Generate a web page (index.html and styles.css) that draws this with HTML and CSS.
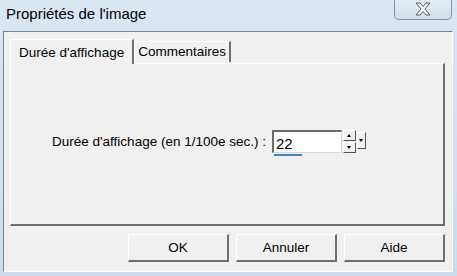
FILE: index.html
```html
<!DOCTYPE html>
<html lang="fr">
<head>
  <meta charset="UTF-8" />
  <title>Propriétés de l'image</title>
  <link rel="stylesheet" href="styles.css">
</head>
<body>
  <div class="window">
    <div class="titlebar">
      <span class="title">Propriétés de l'image</span>
      <button class="close-btn" aria-label="Fermer">
        <svg width="20" height="14" viewBox="0 0 20 14">
          <path d="M3 1 H7 L10 4.5 L13 1 H17 L12 7 L17 13 H13 L10 9.5 L7 13 H3 L8 7 Z" fill="#fff" stroke="#505a66" stroke-width="1" stroke-linejoin="round"/>
        </svg>
      </button>
    </div>

    <div class="client">
      <div class="tabs">
        <div class="tab active">Durée d'affichage</div>
        <div class="tab">Commentaires</div>
      </div>
      <div class="panel">
        <div class="field">
          <label for="duree">Durée d'affichage (en 1/100e sec.) :</label>
          <div class="spin">
            <input type="text" id="duree" value="22">
            <div class="spin-btns">
              <span class="arrow up"></span>
              <span class="arrow down"></span>
            </div>
            <div class="drop"><span class="arrow down"></span></div>
            <div class="progress"></div>
          </div>
        </div>
      </div>
      <div class="actions">
        <button class="btn">OK</button>
        <button class="btn">Annuler</button>
        <button class="btn">Aide</button>
      </div>
    </div>
  </div>
</body>
</html>
```

FILE: styles.css
```css
body {
  margin: 0;
  font-family: "Liberation Sans", Arial, sans-serif;
  font-size: 13.5px;
  color: #000;
}
.window {
  width: 457px;
  height: 276px;
  box-sizing: border-box;
  background: linear-gradient(#dbe6f3, #cfdcec);
  padding: 0 4px 4px 3px;
  display: flex;
  flex-direction: column;
}
.titlebar {
  height: 31px;
  display: flex;
  align-items: flex-start;
  justify-content: space-between;
  flex-shrink: 0;
}
.title {
  font-size: 15px;
  margin: 5px 0 0 3px;
  color: #000;
}
.close-btn {
  width: 58px;
  height: 21px;
  margin: -1px 1px 0 0;
  padding: 0;
  border: 1px solid #8a95a4;
  border-top: none;
  border-radius: 0 0 5px 5px;
  background: linear-gradient(#e6edf6, #d3deec);
  display: flex;
  align-items: center;
  justify-content: center;
}
.client {
  flex: 1;
  background: #f0f0f0;
  border-top: 1px solid #7d848c;
  border-left: 1px solid #7d848c;
  border-right: 1px solid #fff;
  border-bottom: 1px solid #fff;
  padding: 6px 7px 0 6px;
  display: flex;
  flex-direction: column;
}
.tabs {
  display: flex;
  align-items: flex-end;
  height: 25px;
  padding-left: 1px;
  position: relative;
  z-index: 1;
}
.tab {
  height: 20px;
  line-height: 20px;
  padding: 0 3px 0 3px;
  border-top: 1px solid #fff;
  border-left: 1px solid #fff;
  border-right: 2px solid #6f6f6f;
  background: #f0f0f0;
  margin-bottom: 1px;
}
.tab.active {
  height: 24px;
  line-height: 25px;
  padding: 0 8px 0 8px;
  margin-bottom: -1px;
  margin-left: -1px;
}
.panel {
  height: 163px;
  box-sizing: border-box;
  border-top: 1px solid #fff;
  border-left: 1px solid #fff;
  border-right: 2px solid #6f6f6f;
  border-bottom: 2px solid #6f6f6f;
  display: flex;
  align-items: center;
  padding: 0 0 5px 41px;
}
.field {
  display: flex;
  align-items: center;
  gap: 6px;
}
.spin {
  display: flex;
  position: relative;
}
.spin input {
  width: 63px;
  height: 18px;
  padding: 2px 2px 0 2px;
  font-family: inherit;
  font-size: 15px;
  border-top: 2px solid #6a6a6a;
  border-left: 2px solid #6a6a6a;
  border-right: 1px solid #dadada;
  border-bottom: 1px solid #dadada;
  background: #fff;
  outline: none;
}
.spin-btns {
  width: 13px;
  display: flex;
  flex-direction: column;
  gap: 1px;
  margin-left: 1px;
}
.spin-btns .arrow,
.drop {
  flex: 1;
  background: #f0f0f0;
  border: 1px solid #fff;
  border-right-color: #555;
  border-bottom-color: #555;
  display: flex;
  align-items: center;
  justify-content: center;
  box-sizing: border-box;
}
.arrow::after {
  content: "";
  border-left: 2px solid transparent;
  border-right: 2px solid transparent;
}
.arrow.up::after {
  border-bottom: 3px solid #000;
}
.arrow.down::after {
  border-top: 3px solid #000;
}
.drop {
  flex: none;
  width: 9px;
  height: 17px;
  margin-left: 1px;
  margin-top: 2px;
}
.drop .arrow {
  display: flex;
}
.progress {
  position: absolute;
  left: 2px;
  bottom: -3px;
  width: 28px;
  height: 2px;
  background: #3f86c8;
}
.actions {
  display: flex;
  justify-content: flex-end;
  gap: 7px;
  padding: 8px 0 0 0;
}
.btn {
  width: 101px;
  height: 28px;
  font-family: inherit;
  font-size: 13.5px;
  background: #f0f0f0;
  border-top: 1px solid #fff;
  border-left: 1px solid #fff;
  border-right: 2px solid #6f6f6f;
  border-bottom: 2px solid #6f6f6f;
  padding: 0;
  color: #000;
}
```
